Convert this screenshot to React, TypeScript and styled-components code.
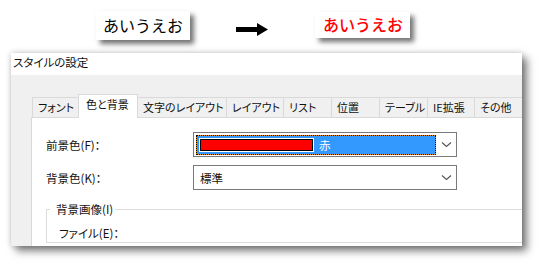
import styled, { createGlobalStyle } from 'styled-components';

const GlobalStyle = createGlobalStyle`
  body {
    margin: 0;
    background: #fff;
    font-family: "Noto Sans CJK JP", "Noto Sans", sans-serif;
    color: #000;
  }
`;

const Page = styled.div`
  width: 541px;
  height: 265px;
  overflow: hidden;
  background: #fff;
`;

const Sample = styled.div`
  display: flex;
  align-items: flex-start;
  height: 53px;
`;

const SampleBox = styled.div<{ $red?: boolean }>`
  box-sizing: border-box;
  background: #fff;
  box-shadow: 4px 4px 5px rgba(0, 0, 0, 0.55);
  font-size: 16px;
  white-space: nowrap;
  color: ${p => (p.$red ? '#ff0000' : '#000')};
  font-weight: ${p => (p.$red ? 500 : 400)};
`;

const FirstBox = styled(SampleBox)`
  margin: 11px 0 0 96px;
  width: 94px;
  height: 29px;
  line-height: 29px;
  padding-left: 7px;
`;

const SecondBox = styled(SampleBox)`
  margin: 12px 0 0 47px;
  width: 95px;
  height: 26px;
  line-height: 25px;
  padding-left: 8px;
`;

const Arrow = styled.svg`
  margin: 23px 0 0 46px;
  flex-shrink: 0;
`;

const Dialog = styled.div`
  margin-left: 11px;
  width: 511px;
  height: 193px;
  background: #f0f0f0;
  box-shadow: 5px 5px 8px rgba(0, 0, 0, 0.5), 0 0 6px rgba(0, 0, 0, 0.2);
  overflow: hidden;
  display: flex;
  flex-direction: column;
  font-feature-settings: "palt";
  font-size: 11.5px;
  color: #111;
`;

const TitleBar = styled.div`
  height: 22px;
  flex-shrink: 0;
  background: #fff;
  padding-left: 2px;
  line-height: 18px;
`;

const Body = styled.div`
  flex: 1;
  padding: 19px 0 0 20px;
  display: flex;
  flex-direction: column;
`;

const TabStrip = styled.div`
  display: flex;
  align-items: flex-end;
  height: 23px;
  padding-left: 1px;
  position: relative;
  z-index: 1;
`;

const Tab = styled.div<{ $active?: boolean; $w: number }>`
  box-sizing: border-box;
  width: ${p => p.$w}px;
  flex-shrink: 0;
  font-size: 11px;
  white-space: nowrap;
  border: 1px solid #d9d9d9;
  border-bottom: none;
  margin-left: -1px;
  background: ${p => (p.$active ? '#fff' : '#f0f0f0')};
  height: ${p => (p.$active ? 24 : 20)}px;
  margin-bottom: ${p => (p.$active ? -1 : 0)}px;
  line-height: 19px;
  padding-left: ${p => (p.$active ? 7 : 5)}px;
  position: relative;
  z-index: ${p => (p.$active ? 1 : 0)};
  &:first-child {
    margin-left: 0;
  }
`;

const Panel = styled.div`
  flex: 1;
  background: #fff;
  border-top: 1px solid #d9d9d9;
  border-left: 1px solid #d9d9d9;
  padding: 14px 0 0 14px;
  display: flex;
  flex-direction: column;
  gap: 8px;
`;

const Row = styled.div`
  display: flex;
  align-items: center;
  height: 25px;
`;

const Label = styled.div`
  width: 147px;
  flex-shrink: 0;
  white-space: nowrap;
`;

const Combo = styled.div`
  box-sizing: border-box;
  width: 264px;
  height: 25px;
  border: 1px solid #7a7a7a;
  display: flex;
  align-items: center;
  background: #fff;
`;

const Selected = styled.div`
  box-sizing: border-box;
  flex: 1;
  height: 20px;
  margin-left: 2px;
  border: 1px dotted #000;
  background: linear-gradient(#3399ff, #3399ff) padding-box, #e8900c;
  display: flex;
  align-items: center;
  padding-left: 3px;
  color: #fff;
`;

const Swatch = styled.span<{ $color: string }>`
  box-sizing: border-box;
  width: 113px;
  height: 12px;
  background: ${p => p.$color};
  border: 1px solid #000;
  box-shadow: 0 0 0 1px #fff;
  margin-right: 6px;
`;

const ComboText = styled.div`
  flex: 1;
  padding-left: 6px;
`;

const Chevron = styled.svg`
  width: 20px;
  flex-shrink: 0;
`;

const Group = styled.fieldset`
  margin: 3px 0 0 0;
  width: 490px;
  padding: 0;
  border: 1px solid #dcdcdc;
  border-right: none;
  min-height: 40px;
`;

const Legend = styled.legend`
  margin-left: 3px;
  padding: 0 2px 0 6px;
  line-height: 16px;
`;

const GroupRow = styled.div`
  padding: 8px 0 0 12px;
  line-height: 16px;
`;

const tabs = [
  { label: 'フォント', w: 47 },
  { label: '色と背景', w: 60, active: true },
  { label: '文字のレイアウト', w: 90 },
  { label: 'レイアウト', w: 58 },
  { label: 'リスト', w: 49 },
  { label: '位置', w: 49 },
  { label: 'テーブル', w: 49 },
  { label: 'IE拡張', w: 48 },
  { label: 'その他', w: 49 },
];

const Down = () => (
  <Chevron height="6" viewBox="0 0 20 6">
    <polyline points="6,0.5 10.5,4.5 15,0.5" fill="none" stroke="#555" strokeWidth="1.1" />
  </Chevron>
);

const App = () => {
  return (
    <Page>
      <GlobalStyle />
      <Sample>
        <FirstBox>あいうえお</FirstBox>
        <Arrow width="32" height="13" viewBox="0 0 32 13">
          <rect x="0" y="4" width="23" height="5" fill="#000" />
          <polygon points="21,0 32,6.5 21,13" fill="#000" />
        </Arrow>
        <SecondBox $red>あいうえお</SecondBox>
      </Sample>
      <Dialog>
        <TitleBar>スタイルの設定</TitleBar>
        <Body>
          <TabStrip>
            {tabs.map(t => (
              <Tab key={t.label} $w={t.w} $active={t.active}>
                {t.label}
              </Tab>
            ))}
          </TabStrip>
          <Panel>
            <Row>
              <Label>前景色(F)：</Label>
              <Combo>
                <Selected>
                  <Swatch $color="#ff0000" />
                  赤
                </Selected>
                <Down />
              </Combo>
            </Row>
            <Row>
              <Label>背景色(K)：</Label>
              <Combo>
                <ComboText>標準</ComboText>
                <Down />
              </Combo>
            </Row>
            <Group>
              <Legend>背景画像(I)</Legend>
              <GroupRow>ファイル(E)：</GroupRow>
            </Group>
          </Panel>
        </Body>
      </Dialog>
    </Page>
  );
};

export default App;
